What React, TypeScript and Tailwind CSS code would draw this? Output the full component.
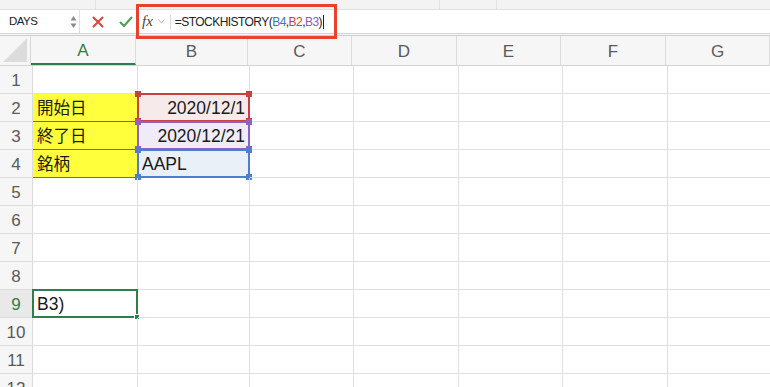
import React from 'react';

const COLS = [
  { key: 'A', w: 'w-[105px]' },
  { key: 'B', w: 'w-[112px]' },
  { key: 'C', w: 'w-[104px]' },
  { key: 'D', w: 'w-[105px]' },
  { key: 'E', w: 'w-[104px]' },
  { key: 'F', w: 'w-[105px]' },
  { key: 'G', w: 'w-[104px]' },
];

type Cell = { text?: string; align?: 'left' | 'right'; cls?: string };

const DATA: Record<string, Cell> = {
  A2: { text: '開始日', cls: 'bg-[#ffff3c] border-b-[#6b6b6b] text-[16.5px]' },
  A3: { text: '終了日', cls: 'bg-[#ffff3c] border-b-[#6b6b6b] text-[16.5px]' },
  A4: { text: '銘柄', cls: 'bg-[#ffff3c] border-b-[#6b6b6b] text-[16.5px]' },
  B2: { text: '2020/12/1', align: 'right', cls: 'bg-[#f7eaea] text-[17.5px]' },
  B3: { text: '2020/12/21', align: 'right', cls: 'bg-[#f0ecf7] text-[17.5px]' },
  B4: { text: 'AAPL', cls: 'bg-[#eaf0f8] text-[17.5px]' },
  A9: { text: 'B3)', cls: 'text-[17.5px]' },
};

// range highlight rings drawn over column B while the formula is edited
const RINGS: Record<string, { border: string; handle: string }> = {
  B2: { border: 'border-[#c8403f]', handle: 'bg-[#c8403f]' },
  B4: { border: 'border-[#4d7fd0]', handle: 'bg-[#4d7fd0]' },
  B3: { border: 'border-[#9060c4]', handle: 'bg-[#9060c4]' },
};

function Ring({ id }: { id: string }) {
  const r = RINGS[id];
  return (
    <div className={`pointer-events-none absolute -left-px -top-px -right-px -bottom-px border-2 ${r.border}`}>
      <span className={`absolute -left-[4px] -top-[4px] h-[6px] w-[6px] ${r.handle}`} />
      <span className={`absolute -right-[4px] -top-[4px] h-[6px] w-[6px] ${r.handle}`} />
      <span className={`absolute -left-[4px] -bottom-[4px] h-[6px] w-[6px] ${r.handle}`} />
      <span className={`absolute -right-[4px] -bottom-[4px] h-[6px] w-[6px] ${r.handle}`} />
    </div>
  );
}

export default function App() {
  const rows = Array.from({ length: 12 }, (_, i) => i + 1);

  return (
    <div
      className="relative h-[387px] w-[770px] overflow-hidden bg-white text-[#1a1a1a]"
      style={{ fontFamily: '"Liberation Sans", "Noto Sans CJK JP", sans-serif' }}
    >
      {/* ribbon remnant */}
      <div className="flex h-[10px] border-b border-[#dedede] bg-[#f3f3f3]">
        <div className="w-[96px] border-r border-[#e2e2e2]" />
        <div className="w-[344px] border-r border-[#e2e2e2]" />
        <div className="w-[57px] border-r border-[#e2e2e2]" />
        <div className="flex-1" />
      </div>

      {/* formula bar */}
      <div className="flex h-[24px] items-center border-b border-[#d6d6d6] bg-white">
        <div className="flex h-full w-[80px] items-center justify-between border-r border-[#e0e0e0] pl-[9px] pr-[2px]">
          <span className="text-[11.5px] tracking-[-0.5px] text-[#222]">DAYS</span>
          <svg width="7" height="16" viewBox="0 0 7 16">
            <path d="M3.5 2 L6.5 6.5 L0.5 6.5 Z" fill="#8a8a8a" />
            <path d="M3.5 14 L6.5 9.5 L0.5 9.5 Z" fill="#8a8a8a" />
          </svg>
        </div>
        <div className="flex w-[56px] items-center gap-[15px] pl-[12px]">
          <svg width="12" height="12" viewBox="0 0 12 12">
            <path d="M1.5 1.5 L10.5 10.5 M10.5 1.5 L1.5 10.5" stroke="#d9463b" strokeWidth="2" strokeLinecap="round" />
          </svg>
          <svg width="14" height="12" viewBox="0 0 14 12">
            <path d="M1.5 6.5 L5 10 L12.5 1.5" stroke="#4d9b56" strokeWidth="2" fill="none" strokeLinecap="round" strokeLinejoin="round" />
          </svg>
        </div>
        <div className="flex h-full flex-1 items-center">
          <span
            className="ml-[6px] text-[15px] italic text-[#444]"
            style={{ fontFamily: '"Liberation Serif", serif' }}
          >
            fx
          </span>
          <svg className="ml-[5px]" width="7" height="5" viewBox="0 0 7 5">
            <path d="M0.5 0.5 L3.5 4 L6.5 0.5" stroke="#b5b5b5" fill="none" />
          </svg>
          <div className="ml-[5px] h-[14px] w-px bg-[#dcdcdc]" />
          <span className="ml-[4px] text-[12px] tracking-[-0.55px] text-[#222]">
            =STOCKHISTORY(<span className="text-[#3c73d0]">B4</span>,
            <span className="text-[#c8403f]">B2</span>,
            <span className="text-[#8a5ac0]">B3</span>)
          </span>
          <span className="ml-px h-[14px] w-px bg-[#222]" />
        </div>
      </div>
      <div className="h-[2px] border-b border-[#cfcfcf] bg-[#f5f5f5]" />

      {/* column headers */}
      <div className="flex h-[30px] border-b border-[#d4d4d4] bg-[#f6f6f6]">
        <div className="relative w-[33px] border-r border-[#d8d8d8]">
          <svg className="absolute bottom-[3px] right-[3px]" width="24" height="24" viewBox="0 0 24 24">
            <path d="M24 0 L24 24 L0 24 Z" fill="#dcdcdc" />
          </svg>
        </div>
        {COLS.map((c) => (
          <div
            key={c.key}
            className={`${c.w} flex shrink-0 items-center justify-center border-r border-[#dcdcdc] pt-[2px] text-[17px] ${
              c.key === 'A' ? 'border-b-2 border-b-[#2f7d4b] text-[#2f7d4b]' : 'text-[#5a5a5a]'
            }`}
          >
            {c.key}
          </div>
        ))}
      </div>

      {/* grid */}
      {rows.map((r) => (
        <div key={r} className="flex h-[28px]">
          <div
            className={`flex w-[33px] shrink-0 items-center justify-center border-b border-r border-[#dcdcdc] pt-[2px] text-[17px] ${
              r === 9 ? 'bg-[#e9e9e9] text-[#2f7d4b]' : 'bg-[#f6f6f6] text-[#5a5a5a]'
            }`}
          >
            {r}
          </div>
          {COLS.map((c) => {
            const id = `${c.key}${r}`;
            const cell = DATA[id];
            const selected = id === 'A9';
            return (
              <div
                key={id}
                className={`${c.w} relative flex shrink-0 items-center border-b border-r border-[#e0e0e0] pt-[2px] ${
                  cell?.align === 'right' ? 'justify-end pr-[4px]' : 'pl-[4px]'
                } ${cell?.cls ?? ''}`}
              >
                {cell?.text}
                {RINGS[id] && <Ring id={id} />}
                {selected && (
                  <div className="pointer-events-none absolute -left-px -top-px -right-px -bottom-px border-2 border-[#2f7d4b]">
                    <span className="absolute -right-[4px] -bottom-[4px] h-[6px] w-[6px] border border-white bg-[#2f7d4b]" />
                  </div>
                )}
              </div>
            );
          })}
        </div>
      ))}

      {/* annotation box around the formula */}
      <div className="pointer-events-none absolute left-[136px] top-[4px] h-[35px] w-[201px] border-[3px] border-[#e8412c]" />
    </div>
  );
}
